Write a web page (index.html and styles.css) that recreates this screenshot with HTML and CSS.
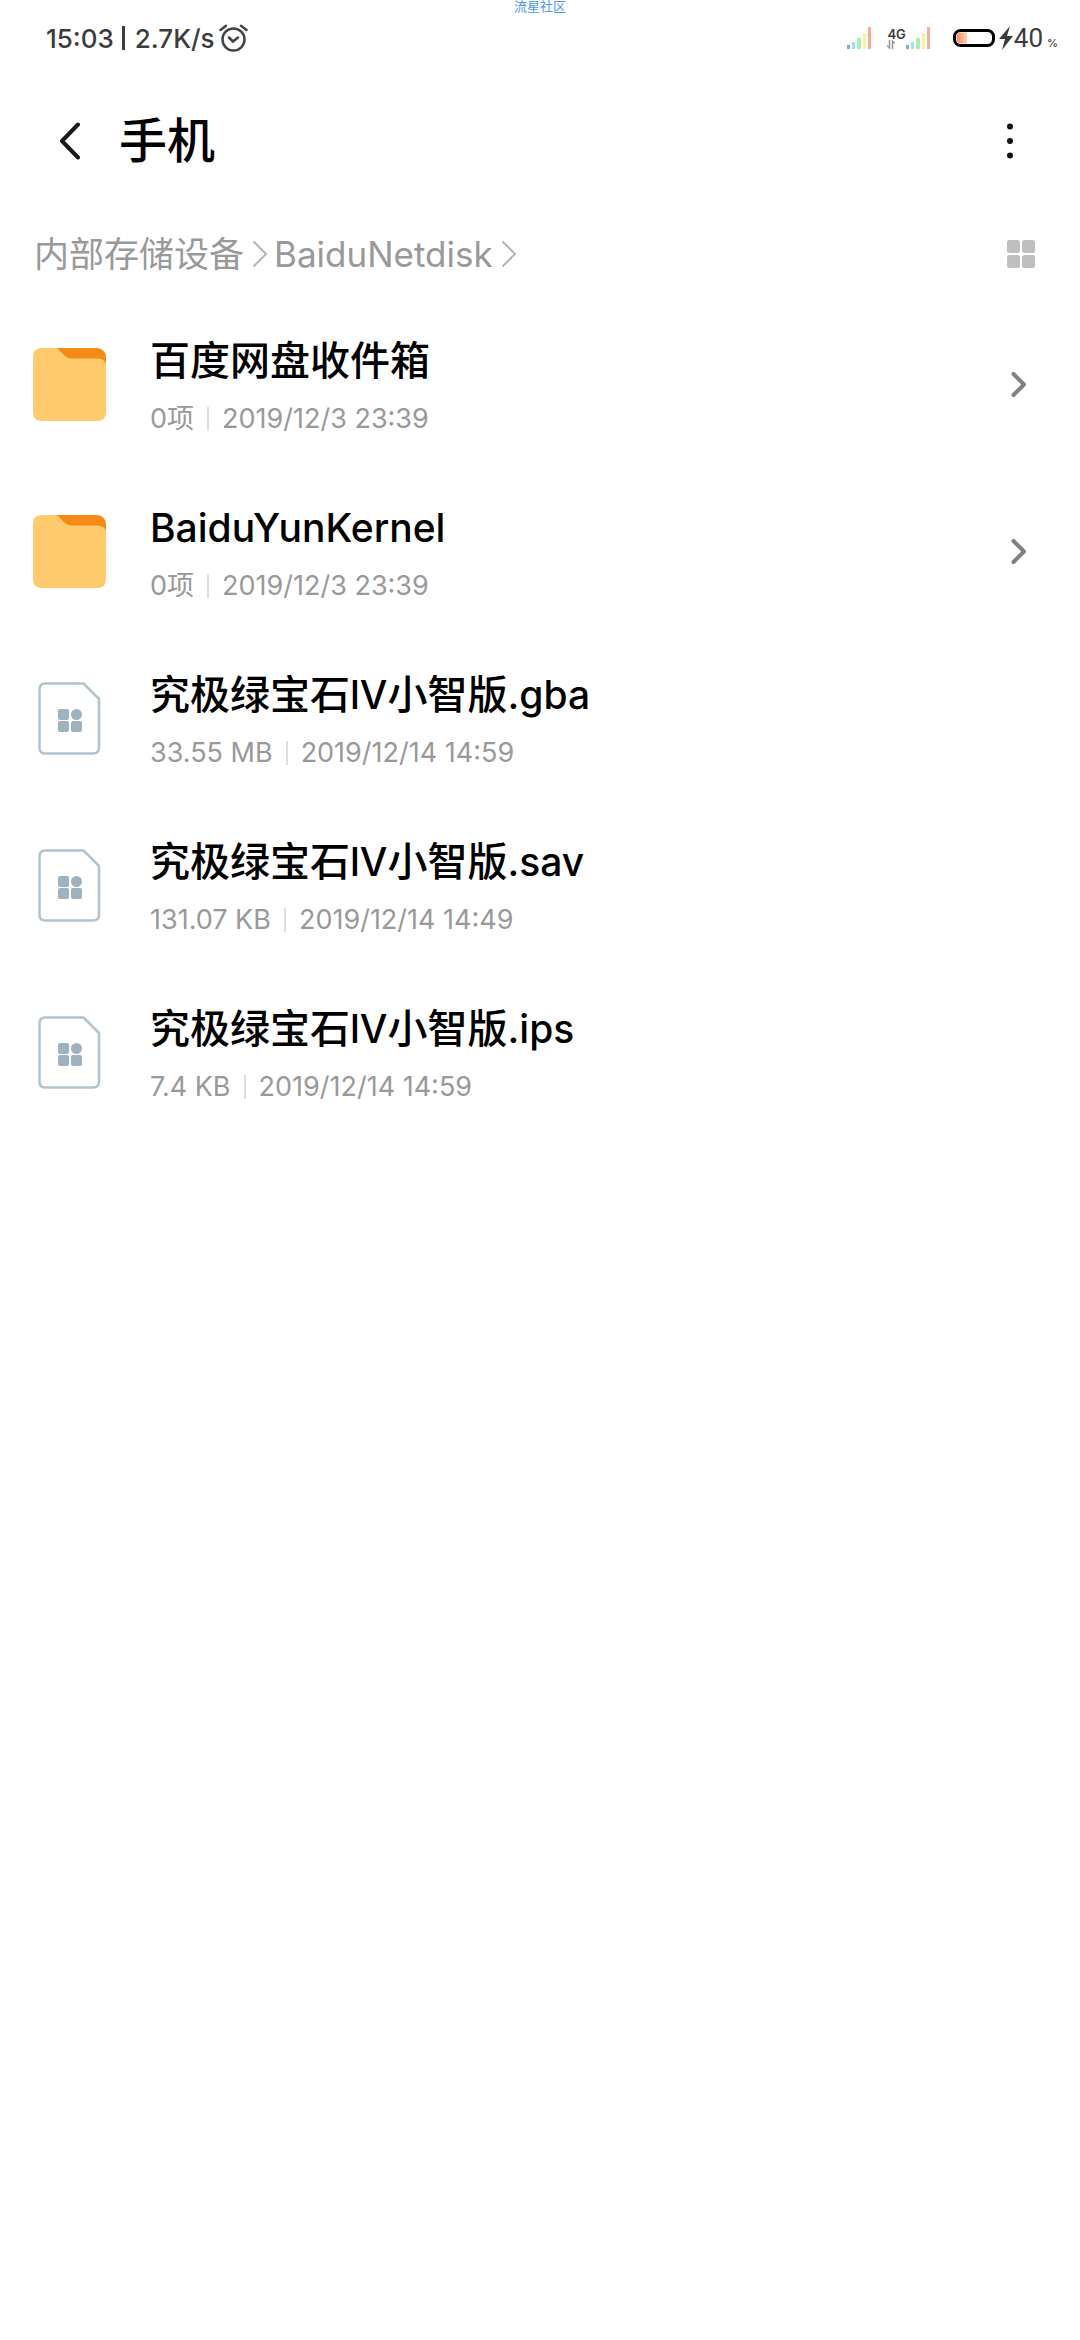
FILE: index.html
```html
<!DOCTYPE html>
<html lang="zh-CN">
<head>
<meta charset="utf-8">
<meta name="viewport" content="width=device-width, initial-scale=1">
<title>手机</title>
<link rel="stylesheet" href="styles.css">
</head>
<body>
<svg width="0" height="0" class="defs" aria-hidden="true">
  <linearGradient id="charge"><stop offset="0" stop-color="#f6836a"/><stop offset="1" stop-color="#fcd3a4"/></linearGradient>
  <symbol id="signal" viewBox="0 0 24 22">
    <rect x="0" y="18" width="3" height="4" fill="#8fa8dc"/>
    <rect x="5" y="15" width="3" height="7" fill="#9fe3ea"/>
    <rect x="10" y="11" width="4" height="11" fill="#a9efae"/>
    <rect x="16" y="6" width="3" height="16" fill="#f3f3a0"/>
    <rect x="21" y="0" width="3" height="22" fill="#f2ab9c"/>
  </symbol>
  <symbol id="folder" viewBox="0 0 73 73">
    <rect x="15" y="0" width="58" height="40" rx="9" fill="#f58a16"/>
    <path d="M9 0H24L32 8Q35 10.500 39 10.500H64Q73 10.500 73 18V64Q73 73 64 73H9Q0 73 0 64V9Q0 0 9 0Z" fill="#ffca6b"/>
  </symbol>
  <symbol id="file" viewBox="0 0 73 73">
    <path d="M12 1.500H50.500L66 17V65.500Q66 71.500 60 71.500H12Q6.500 71.500 6.500 65.500V7.500Q6.500 1.500 12 1.500Z" fill="#fff" stroke="#b3c3cd" stroke-width="2.500" stroke-linejoin="round"/>
    <g fill="#9fb2bf"><rect x="25" y="27" width="11" height="11" rx="2"/><circle cx="43.500" cy="32.500" r="5.500"/><rect x="25" y="39" width="11" height="11" rx="2"/><rect x="38" y="39" width="11" height="11" rx="2"/></g>
  </symbol>
  <symbol id="next" viewBox="0 0 16 26">
    <path d="M2.500 2L13 12.500L2.500 23" fill="none" stroke="#808080" stroke-width="4" stroke-linecap="round" stroke-linejoin="round"/>
  </symbol>
  <symbol id="crumb" viewBox="0 0 16 28">
    <path d="M1.500 1.500L14 14L1.500 26.500" fill="none" stroke="#b5b5b5" stroke-width="2"/>
  </symbol>
</svg>

<div class="watermark">流星社区</div>

<header class="status">
  <div class="status-left">
    <span>15:03</span><i class="status-bar"></i><span>2.7K/s</span>
    <svg class="alarm" viewBox="0 0 29 28" fill="none" stroke="#444" stroke-width="2.500" stroke-linecap="round">
      <circle cx="14.500" cy="15.500" r="11"/><path d="M10 13.500L14 17.500L19 13.500M1.500 6L7 1.800M27.500 6L22 1.800"/>
    </svg>
  </div>
  <div class="status-right">
    <svg class="signal"><use href="#signal"/></svg>
    <div class="mobile">
      <div class="network">
        <span>4G</span>
        <svg class="traffic" viewBox="0 0 8 9" fill="none" stroke="#999" stroke-width="1.500"><path d="M2.500 0V8L0 5.500M5.500 9V1L8 3.500"/></svg>
      </div>
      <svg class="signal"><use href="#signal"/></svg>
    </div>
    <div class="battery">
      <svg class="cell" viewBox="0 0 42 18"><rect x="1.500" y="1.500" width="39" height="15" rx="6" fill="#fff" stroke="#000" stroke-width="3"/><path d="M8 3.500H14V14.500H8Q3.500 14.500 3.500 9Q3.500 3.500 8 3.500Z" fill="url(#charge)"/></svg>
      <svg class="bolt" viewBox="0 0 14 24"><path d="M11 0L0 13H6L3 24L14 10H8Z" fill="#3c3c3c"/></svg>
      <span class="level">40</span><span class="percent">%</span>
    </div>
  </div>
</header>

<div class="toolbar">
  <button class="icon-button" aria-label="返回"><svg class="back" viewBox="0 0 22 38"><path d="M19 2.500L3 19L19 35.500" fill="none" stroke="#1a1a1a" stroke-width="4" stroke-linecap="round" stroke-linejoin="round"/></svg></button>
  <h1>手机</h1>
  <button class="icon-button" aria-label="更多"><svg class="more" viewBox="0 0 6 36" fill="#111"><circle cx="3" cy="3.500" r="3"/><circle cx="3" cy="18" r="3"/><circle cx="3" cy="32.500" r="3"/></svg></button>
</div>

<nav class="path">
  <a href="#">内部存储设备</a><svg class="crumb"><use href="#crumb"/></svg>
  <a href="#">BaiduNetdisk</a><svg class="crumb"><use href="#crumb"/></svg>
  <button class="icon-button view" aria-label="网格视图"><svg class="grid" viewBox="0 0 28 28" fill="#bfbfbf"><rect width="13" height="13" rx="2.500"/><rect x="15" width="13" height="13" rx="2.500"/><rect y="15" width="13" height="13" rx="2.500"/><rect x="15" y="15" width="13" height="13" rx="2.500"/></svg></button>
</nav>

<main>
  <ul class="files">
    <li class="row">
      <svg class="thumb"><use href="#folder"/></svg>
      <div class="info"><a class="name" href="#">百度网盘收件箱</a><div class="meta"><span>0项</span><i></i><span>2019/12/3 23:39</span></div></div>
      <svg class="next"><use href="#next"/></svg>
    </li>
    <li class="row">
      <svg class="thumb"><use href="#folder"/></svg>
      <div class="info"><a class="name latin" href="#">BaiduYunKernel</a><div class="meta"><span>0项</span><i></i><span>2019/12/3 23:39</span></div></div>
      <svg class="next"><use href="#next"/></svg>
    </li>
    <li class="row">
      <svg class="thumb"><use href="#file"/></svg>
      <div class="info"><a class="name" href="#">究极绿宝石<span class="latin">lV</span>小智版<span class="latin">.gba</span></a><div class="meta"><span>33.55 MB</span><i></i><span>2019/12/14 14:59</span></div></div>
    </li>
    <li class="row">
      <svg class="thumb"><use href="#file"/></svg>
      <div class="info"><a class="name" href="#">究极绿宝石<span class="latin">lV</span>小智版<span class="latin">.sav</span></a><div class="meta"><span>131.07 KB</span><i></i><span>2019/12/14 14:49</span></div></div>
    </li>
    <li class="row">
      <svg class="thumb"><use href="#file"/></svg>
      <div class="info"><a class="name" href="#">究极绿宝石<span class="latin">lV</span>小智版<span class="latin">.ips</span></a><div class="meta"><span>7.4 KB</span><i></i><span>2019/12/14 14:59</span></div></div>
    </li>
  </ul>
</main>
</body>
</html>
```
FILE: styles.css
```css
* { box-sizing: border-box; }

body {
  margin: 0;
  min-height: 100vh;
  background: #fff;
  color: #000;
  font-family: Inter, "Noto Sans CJK SC", sans-serif;
}

svg { display: block; flex: none; }
a { color: inherit; text-decoration: none; }
.defs { position: absolute; }

.watermark {
  position: absolute;
  top: 0;
  left: 0;
  right: 0;
  text-align: center;
  font-size: 13px;
  line-height: 12px;
  color: #4a96e8;
}

.status {
  display: flex;
  align-items: center;
  justify-content: space-between;
  height: 76px;
  padding: 0 22px 0 46px;
  color: #3c3c3c;
}
.status-left { display: flex; align-items: center; font-size: 26px; font-weight: 500; }
.status-bar { width: 3px; height: 24px; margin: 0 10px 0 8px; background: #3c3c3c; }
.alarm { width: 29px; height: 28px; margin-left: 4px; }
.status-right { display: flex; align-items: center; }
.signal { width: 24px; height: 22px; }
.mobile { display: flex; align-items: flex-end; margin: 0 23px 0 16px; }
.network { font-size: 13px; font-weight: 600; line-height: 12px; }
.network span { display: block; }
.traffic { width: 8px; height: 9px; }
.battery { display: flex; align-items: center; }
.cell { width: 42px; height: 18px; }
.bolt { width: 14px; height: 24px; margin: 0 1px 0 4px; }
.level { font-family: Roboto, sans-serif; font-size: 26px; line-height: 26px; }
.percent { align-self: flex-end; margin-left: 4px; font-size: 11px; font-weight: 500; line-height: 16px; }

.icon-button {
  display: flex;
  align-items: center;
  padding: 0;
  border: 0;
  background: none;
}

.toolbar { display: flex; align-items: center; height: 130px; padding: 0 67px 0 59px; }
.toolbar h1 { flex: 1; margin: 0 0 0 38px; font-size: 48px; font-weight: 500; line-height: 64px; }
.back { width: 22px; height: 38px; }
.more { width: 6px; height: 36px; }

.path {
  display: flex;
  align-items: center;
  height: 95px;
  padding: 0 45px 0 34px;
  font-size: 35px;
  line-height: 48px;
  color: #999;
}
.crumb { width: 16px; height: 28px; margin: 0 6px 0 8px; }
.view { margin-left: auto; }
.grid { width: 28px; height: 28px; }

.files { margin: 0; padding: 0; list-style: none; }
.row { display: flex; align-items: center; height: 167px; padding: 0 53px 0 33px; }
.thumb { width: 73px; height: 73px; }
.info { flex: 1; display: flex; flex-direction: column; gap: 8px; margin-left: 44px; }
.name { font-size: 40px; font-weight: 500; line-height: 60px; }
.latin { font-size: 39px; }
.meta { display: flex; align-items: center; font-size: 27px; line-height: 40px; color: #999; }
.meta i { width: 2px; height: 24px; margin: 0 13px; background: #ddd; }
.next { width: 16px; height: 26px; }
```
